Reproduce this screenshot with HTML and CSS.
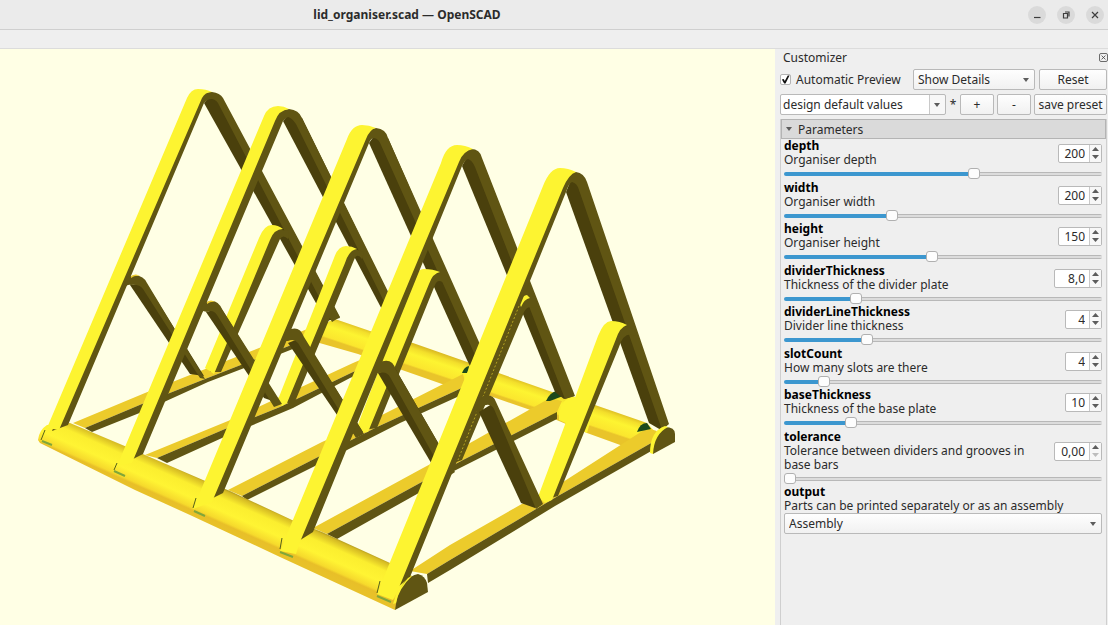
FILE: index.html
```html
<!DOCTYPE html>
<html lang="en">
<head>
    <meta charset="UTF-8">
    <meta name="viewport" content="width=device-width, initial-scale=1.0">
    <title>lid_organiser.scad — OpenSCAD</title>
    <link rel="stylesheet" href="styles.css">
</head>
<body>
    <header class="titlebar">
        <h1>lid_organiser.scad — OpenSCAD</h1>
        <div class="window-buttons">
            <button type="button" aria-label="Minimize"><svg viewBox="0 0 18 18"><path d="M6 11.5h6.500"/></svg></button>
            <button type="button" aria-label="Restore"><svg viewBox="0 0 18 18"><path d="M6.500 7.500h4v4.500h-4zM8 6h4v4.500"/></svg></button>
            <button type="button" aria-label="Close"><svg viewBox="0 0 18 18"><path d="M6 6l6 6M12 6l-6 6"/></svg></button>
        </div>
    </header>
    <div class="menubar"></div>

    <div class="workspace">
        <main class="viewer">
            <svg class="model" viewBox="0 49 775 576" preserveAspectRatio="xMidYMid slice" role="img" aria-label="Lid organiser model">
                <defs>
                    <linearGradient id="backBar" gradientUnits="userSpaceOnUse" x1="500" y1="373" x2="491" y2="400">
                        <stop offset="0" stop-color="#dcbc22"/>
                        <stop offset="0.15" stop-color="#f3df2b"/>
                        <stop offset="0.35" stop-color="#fdf431"/>
                        <stop offset="0.72" stop-color="#fbe62e"/>
                        <stop offset="0.78" stop-color="#e9c42a"/>
                        <stop offset="1" stop-color="#e9c42a"/>
                    </linearGradient>
                    <linearGradient id="frontBar" gradientUnits="userSpaceOnUse" x1="230" y1="489" x2="214" y2="525">
                        <stop offset="0" stop-color="#8f7c18"/>
                        <stop offset="0.1" stop-color="#d6bb23"/>
                        <stop offset="0.3" stop-color="#fbee2f"/>
                        <stop offset="0.6" stop-color="#fff433"/>
                        <stop offset="0.82" stop-color="#f6da2c"/>
                        <stop offset="0.88" stop-color="#e8bf28"/>
                        <stop offset="1" stop-color="#e8c129"/>
                    </linearGradient>
                </defs>

                <!-- back bar -->
                <path fill="url(#backBar)" d="M335 319L370 331L413 343L470 363L555 393L595 405L647 423L655 432L623 446L587 433L545 415L490 396L442 384L402 370L358 354L316 342Q322 322 335 319z"/>

                <!-- base strips, back to front -->
                <g class="top">
                    <path d="M73 423L145 393L190 375L310 328L314 336L205 379L142 404L85 428z"/>
                    <path d="M145 455L228 421L353 363L400 343L403 351L353 372L280 407L225 429L157 458z"/>
                    <path d="M228 490L322 442L378 417L463 374L466 386L377 427L318 457L242 496z"/>
                    <path d="M313 528L423 468L470 443L550 398L562 401L557 412L463 460L420 483L327 534z"/>
                    <path d="M410 571L450 545L520 505L563 482L647 428L657 431L653 442L558 496L450 560L427 574z"/>
                </g>
                <g class="side">
                    <path d="M85 428L142 404L205 379L314 336L313 341L260 362L208 382L142 412L92 432z"/>
                    <path d="M157 458L225 429L280 407L353 372L403 351V355L350 378L293 408L222 438L167 463z"/>
                    <path d="M242 496L318 457L377 427L466 386V393L400 423L347 450L313 467L247 500z"/>
                    <path d="M327 534L420 483L463 460L557 412V419L450 473L417 494L337 539z"/>
                    <path d="M427 574L450 560L558 496L653 442V450L555 506L450 570L428 583z"/>
                </g>
                <path class="lit" d="M572 396L595 405L587 433L559 420Q558 402 572 396z"/>

                <!-- front bar -->
                <path fill="url(#frontBar)" d="M38 440Q39 430 47 425L70 423L127 447L145 455L203 480L230 491L292 520L322 532L390 563L412 576L395 610L280 557L190 515L135 490L40 443z"/>

                <!-- divider 1 -->
                <path class="inner" d="M204 103L209 97L222 98L340 318L326 321z"/>
                <path class="side" d="M197 98Q205 91 212 92Q220 93 223 98L340 317L332 322L219 105Q217 100 212 99Q207 99 204 103L68 425L52 431z"/>
                <path class="lit" d="M47 428L187 98Q191 89 198 89Q206 89 212 92Q205 92 202 98L59 430z"/>
                <path class="side" d="M276 229L289 231L288 239Q283 234 280 239L221 372L210 372L264 243z"/>
                <path class="lit" d="M205 368L259 238Q264 225 272 225Q278 225 283 229Q274 229 270 240L214 374z"/>
                <path class="inner" d="M130 285L146 283L204 376L190 374z"/>
                <path class="side" d="M127 277Q142 272 147 283L205 379L200 378L143 289Q139 284 131 285Q127 284 123 289z"/>
                <path class="glint" d="M131 276Q136 273 140 276Q135 275 131 278z"/>

                <!-- divider 2 -->
                <path class="inner" d="M283 121L288 115L302 118L410 338L398 340z"/>
                <path class="side" d="M270 120Q280 109 289 109Q299 110 302 118L411 338L403 340L296 124Q292 118 288 117Q285 118 283 121L143 454L125 463z"/>
                <path class="lit" d="M117 466L264 116Q268 106 278 106Q284 106 289 109Q279 110 275 121L132 463z"/>
                <path class="side" d="M351 248L364 252L362 259Q357 252 354 260L294 404L283 402L339 267z"/>
                <path class="lit" d="M277 402L334 258Q338 246 346 246Q352 246 357 249Q349 250 345 263L287 403L282 406z"/>
                <path class="inner" d="M206 312L221 308L281 404L264 398z"/>
                <path class="side" d="M203 304Q216 296 222 309L282 404L274 407L217 315Q213 309 207 312L203 311L198 318z"/>
                <path class="glint" d="M207 302Q211 299 215 302Q211 301 207 304z"/>

                <!-- divider 3 -->
                <path class="inner" d="M369 143L374 136L388 138L485 360L473 372L467 360z"/>
                <path class="side" d="M358 140Q369 128 376 128Q386 129 388 138L487 360L479 364L381 145Q379 139 374 138Q371 138 369 143L223 493L205 502z"/>
                <path class="lit" d="M193 509L347 139Q352 125 362 125Q369 125 376 128Q370 129 366 139L212 502z"/>
                <path class="side" d="M434 272L449 277L446 285Q438 277 435 285L377 428L363 430L424 281z"/>
                <path class="lit" d="M357 427L411 285Q416 269 424 269Q433 269 440 272Q433 273 429 284L368 432L361 433z"/>
                <path class="inner" d="M288 343L303 337L363 432L350 434z"/>
                <path class="side" d="M287 331Q299 324 304 337L364 434L356 438L298 343Q294 338 288 341L284 341L280 351z"/>

                <!-- divider 4 -->
                <path class="slot" d="M546 401Q550 392 557 391L563 396L550 401z"/>
                <path class="slot" d="M462 373Q464 367 469 366L468 373z"/>
                <path class="inner" d="M462 166L467 157L482 160L574 396L564 399L555 392z"/>
                <path class="side" d="M452 160Q463 149 471 149Q480 149 482 158L575 396L565 399L475 167Q472 160 468 159Q465 160 462 166L313 532L294 544z"/>
                <path class="lit" d="M280 551L441 163Q446 145 457 145Q465 145 473 149Q463 151 459 162L300 542L296 554z"/>
                <path class="side" d="M514 300L524 290Q533 292 537 305L535 308Q526 304 523 315L462 460L446 466z"/>
                <path class="lit" d="M519 302Q523 295 527 295L530 298Q524 299 521 307z"/>
                <path class="inner" d="M378 373L395 368L452 467L440 478z"/>
                <path class="side" d="M378 363Q392 356 396 370L455 472L446 478L390 377Q387 371 379 373L375 373L371 382z"/>

                <!-- divider 5 -->
                <path class="slot" d="M637 432Q640 423 647 423L651 429z"/>
                <path class="inner" d="M566 192L571 180L586 182L668 424L661 430L649 423z"/>
                <path class="side" d="M555 188Q569 172 576 172Q584 173 587 182L669 424L662 430L579 190Q577 183 572 182Q569 183 566 192L410 577L392 592z"/>
                <path class="lit" d="M377 594L543 186Q550 168 560 168Q568 168 576 172Q569 174 563 188L398 590L393 600z"/>
                <path class="seam" d="M519 306L458 460"/>
                <path class="side" d="M621 325L634 329L636 336Q624 330 619 347L558 496L547 499L612 340z"/>
                <path class="lit" d="M538 497L598 336Q604 321 611 321Q620 321 627 325Q620 327 616 339L552 500L545 503z"/>
                <path class="inner" d="M479 412L495 402L541 505L535 508L521 503z"/>
                <path class="side" d="M483 396Q493 393 496 402L543 504L536 509L494 409Q491 404 486 405Q481 405 479 412L476 414L478 402z"/>

                <!-- end caps -->
                <path class="side" d="M653 454Q652 432 665 427Q675 427 675 434V442z"/>
                <path class="lit" d="M650 453Q650 431 665 426L668 427Q654 434 653 454z"/>
                <path class="side" d="M395 610L397 598Q403 577 418 574Q425 576 427 583L428 592z"/>
                <path class="lit" d="M393 604L397 592L408 578L412 576Q399 588 396 603z"/>

                <!-- grooves under the divider feet -->
                <path class="groove" d="M42 441L52 445M114 471L125 476M194 511L205 516M280 552L293 557M377 596L391 602"/>
                <path class="crack" d="M45 430L41 440M117 463L114 470M196 498L193 508M282 538L280 549M380 581L377 593"/>
            </svg>
        </main>

        <aside class="customizer">
            <div class="dock-title">
                <h2>Customizer</h2>
                <button type="button" class="dock-close" aria-label="Close"><svg viewBox="0 0 9 9"><path d="M2 2l5 5M7 2l-5 5"/></svg></button>
            </div>

            <div class="toolbar">
                <input type="checkbox" id="preview" class="check" checked>
                <label for="preview" class="check-label">Automatic Preview</label>
                <div class="select details">
                    <select aria-label="Detail level"><option>Show Details</option></select>
                </div>
                <button type="button" class="btn reset">Reset</button>
            </div>

            <div class="toolbar">
                <div class="select preset">
                    <select aria-label="Preset"><option>design default values</option></select>
                </div>
                <span class="dirty">*</span>
                <button type="button" class="btn small">+</button>
                <button type="button" class="btn small">-</button>
                <button type="button" class="btn save">save preset</button>
            </div>

            <section class="params">
                <button type="button" class="group">Parameters</button>

                <div class="param">
                    <label for="depth"><b>depth</b>Organiser depth</label>
                    <div class="spin w3"><input id="depth" type="text" value="200"><span class="arrows"><button type="button" aria-label="Up"></button><button type="button" aria-label="Down"></button></span></div>
                    <input type="range" aria-label="depth" min="50" max="300" value="200" style="--fill: 60%">
                </div>
                <div class="param">
                    <label for="width"><b>width</b>Organiser width</label>
                    <div class="spin w3"><input id="width" type="text" value="200"><span class="arrows"><button type="button" aria-label="Up"></button><button type="button" aria-label="Down"></button></span></div>
                    <input type="range" aria-label="width" min="50" max="500" value="200" style="--fill: 33%">
                </div>
                <div class="param">
                    <label for="height"><b>height</b>Organiser height</label>
                    <div class="spin w3"><input id="height" type="text" value="150"><span class="arrows"><button type="button" aria-label="Up"></button><button type="button" aria-label="Down"></button></span></div>
                    <input type="range" aria-label="height" min="20" max="300" value="150" style="--fill: 46%">
                </div>
                <div class="param">
                    <label for="dividerThickness"><b>dividerThickness</b>Thickness of the divider plate</label>
                    <div class="spin w4"><input id="dividerThickness" type="text" value="8,0"><span class="arrows"><button type="button" aria-label="Up"></button><button type="button" aria-label="Down"></button></span></div>
                    <input type="range" aria-label="dividerThickness" min="2" max="30" value="8" style="--fill: 21%">
                </div>
                <div class="param">
                    <label for="dividerLineThickness"><b>dividerLineThickness</b>Divider line thickness</label>
                    <div class="spin w2"><input id="dividerLineThickness" type="text" value="4"><span class="arrows"><button type="button" aria-label="Up"></button><button type="button" aria-label="Down"></button></span></div>
                    <input type="range" aria-label="dividerLineThickness" min="1" max="13" value="4" style="--fill: 25%">
                </div>
                <div class="param">
                    <label for="slotCount"><b>slotCount</b>How many slots are there</label>
                    <div class="spin w2"><input id="slotCount" type="text" value="4"><span class="arrows"><button type="button" aria-label="Up"></button><button type="button" aria-label="Down"></button></span></div>
                    <input type="range" aria-label="slotCount" min="2" max="20" value="4" style="--fill: 11%">
                </div>
                <div class="param">
                    <label for="baseThickness"><b>baseThickness</b>Thickness of the base plate</label>
                    <div class="spin w2"><input id="baseThickness" type="text" value="10"><span class="arrows"><button type="button" aria-label="Up"></button><button type="button" aria-label="Down"></button></span></div>
                    <input type="range" aria-label="baseThickness" min="5" max="30" value="10" style="--fill: 20%">
                </div>
                <div class="param">
                    <label for="tolerance"><b>tolerance</b>Tolerance between dividers and grooves in base bars</label>
                    <div class="spin w4"><input id="tolerance" type="text" value="0,00"><span class="arrows"><button type="button" aria-label="Up"></button><button type="button" aria-label="Down" disabled></button></span></div>
                    <input type="range" aria-label="tolerance" min="0" max="1" step="0.01" value="0" style="--fill: 0%">
                </div>
                <div class="param output">
                    <label for="output"><b>output</b>Parts can be printed separately or as an assembly</label>
                    <div class="select">
                        <select id="output"><option>Assembly</option></select>
                    </div>
                </div>
            </section>
        </aside>
    </div>
</body>
</html>
```
FILE: styles.css
```css
* {
    box-sizing: border-box;
}

body {
    font-family: "Noto Sans", "Open Sans", sans-serif;
    font-size: 12px;
    margin: 0;
    height: 100vh;
    display: flex;
    flex-direction: column;
    overflow: hidden;
    background-color: #efefef;
    color: #2b2b2b;
}

button, input, select {
    font: inherit;
    color: inherit;
    margin: 0;
    padding: 0;
}

/* window frame */
.titlebar {
    display: flex;
    align-items: center;
    height: 30px;
    background-color: #ebebeb;
    border-bottom: 1px solid #cfcfcf;
}

.titlebar h1 {
    flex: 1;
    margin: 0;
    padding-right: 214px;
    text-align: center;
    font-size: 12px;
    font-weight: 700;
}

.window-buttons {
    display: flex;
    gap: 11px;
    padding-right: 4px;
}

.window-buttons button {
    width: 18px;
    height: 18px;
    border: none;
    border-radius: 50%;
    background-color: #dadada;
}

.window-buttons svg {
    display: block;
    width: 18px;
    height: 18px;
    fill: none;
    stroke: #3d3d3d;
    stroke-width: 1.2;
}

.menubar {
    height: 19px;
    border-bottom: 1px solid #dcdcdc;
}

.workspace {
    flex: 1;
    display: flex;
    min-height: 0;
}

/* 3D view */
.viewer {
    flex: 1;
    min-width: 0;
    background-color: #ffffe5;
}

.model {
    display: block;
    width: 100%;
    height: 100%;
}

.lit {
    fill: #fdf431;
}

.top {
    fill: #eccb2b;
}

.side {
    fill: #605513;
}

.inner {
    fill: #4a400c;
}

.glint {
    fill: #eccb2b;
}

.slot {
    fill: #1d4a1c;
}

.seam {
    fill: none;
    stroke: #b5a322;
    stroke-dasharray: 2 2;
}

.groove {
    fill: none;
    stroke: #7fa63a;
    stroke-width: 2;
}

.crack {
    fill: none;
    stroke: #55611a;
}

/* customizer dock */
.customizer {
    width: 333px;
    padding: 0 1px 0 5px;
    display: flex;
    flex-direction: column;
}

.dock-title {
    display: flex;
    align-items: center;
    justify-content: space-between;
    height: 18px;
    padding: 0 0 2px 3px;
}

.dock-title h2 {
    margin: 0;
    font-size: 12px;
    font-weight: 400;
}

.dock-close {
    width: 9px;
    height: 9px;
    margin-right: -1px;
    border: 1px solid #6b6b6b;
    border-radius: 2px;
    background: none;
}

.dock-close svg {
    display: block;
    width: 7px;
    height: 7px;
    stroke: #3d3d3d;
}

.toolbar {
    display: flex;
    align-items: center;
    height: 25px;
}

.check {
    appearance: none;
    width: 11px;
    height: 11px;
    border: 1px solid #b4b4b4;
    border-radius: 2px;
    background-color: #fff;
}

.check:checked::before {
    content: "";
    display: block;
    height: 9px;
    background-color: #111;
    clip-path: polygon(10% 50%, 30% 45%, 42% 68%, 75% 5%, 95% 5%, 50% 95%, 35% 95%);
}

.check-label {
    flex: 1;
    padding-left: 5px;
    white-space: nowrap;
}

.btn, .select select {
    height: 21px;
    border: 1px solid #b9b9b9;
    border-radius: 2px;
    background: linear-gradient(#fefefe, #f1f1f1);
    white-space: nowrap;
}

.reset {
    width: 68px;
    margin-left: 4px;
}

.small {
    width: 34px;
    margin-right: 3px;
}

.save {
    flex: 1;
}

.dirty {
    width: 14px;
    text-align: center;
}

.select {
    position: relative;
}

.select select {
    appearance: none;
    display: block;
    width: 100%;
    padding-left: 4px;
}

.select::after {
    content: "";
    position: absolute;
    right: 6px;
    top: 9px;
    border: 3px solid transparent;
    border-top: 4px solid #5c5c5c;
    border-bottom: none;
    pointer-events: none;
}

.details {
    width: 122px;
}

.preset {
    width: 166px;
}

.select.preset select {
    padding-left: 2px;
    background: linear-gradient(90deg, #fff 148px, #c9c9c9 148px, #c9c9c9 149px, #f7f7f7 149px);
}

/* parameter list */
.params {
    flex: 1;
    margin-top: 2px;
    border-right: 1px solid #cfcfcf;
    border-left: 1px solid #cfcfcf;
}

.group {
    display: flex;
    align-items: center;
    width: 100%;
    height: 20px;
    border: 1px solid #b4b4b4;
    background-color: #dadada;
    padding-left: 4px;
}

.group::before {
    content: "";
    margin-right: 6px;
    border: 3px solid transparent;
    border-top: 4px solid #5c5c5c;
    border-bottom: none;
}

.param {
    display: grid;
    grid-template-columns: 1fr auto;
    align-items: center;
    padding: 0 4px 0 3px;
}

.param:nth-child(even) {
    padding-bottom: 1px;
}

.param label {
    padding-right: 16px;
    line-height: 14px;
}

.param b {
    display: block;
    color: #000;
}

.spin {
    display: flex;
    height: 19px;
    border: 1px solid #b9b9b9;
    border-radius: 2px;
    background-color: #fff;
}

.spin input {
    flex: 1;
    min-width: 0;
    border: none;
    padding-right: 4px;
    background: none;
    text-align: right;
}

.w2 {
    width: 37px;
}

.w3 {
    width: 44px;
}

.w4 {
    width: 48px;
}

.arrows {
    display: flex;
    flex-direction: column;
    justify-content: center;
    gap: 4px;
    width: 12px;
    border-left: 1px solid #c9c9c9;
    background-color: #f7f7f7;
    align-items: center;
}

.arrows button {
    width: 7px;
    height: 4px;
    border: none;
    background-color: #5c5c5c;
    clip-path: polygon(50% 0, 100% 100%, 0 100%);
}

.arrows button:last-child {
    clip-path: polygon(0 0, 100% 0, 50% 100%);
}

.arrows button:disabled {
    background-color: #bdbdbd;
}

.param input[type="range"] {
    appearance: none;
    grid-column: 1 / 3;
    width: 100%;
    height: 13px;
    background: none;
}

.param input[type="range"]::-webkit-slider-runnable-track {
    height: 4px;
    border-radius: 2px;
    background:
        linear-gradient(90deg, #3c97cf var(--fill), transparent var(--fill)),
        linear-gradient(#b8b8b8 1px, #dcdcdc 1px, #dcdcdc 3px, #b8b8b8 3px);
}

.param input[type="range"]::-webkit-slider-thumb {
    appearance: none;
    width: 12px;
    height: 11px;
    margin-top: -4px;
    border: 1px solid #b0b0b0;
    border-radius: 3px;
    background-color: #fdfdfd;
}

.output label {
    padding-right: 0;
    white-space: nowrap;
}

.output .select {
    grid-column: 1 / 3;
}
```
